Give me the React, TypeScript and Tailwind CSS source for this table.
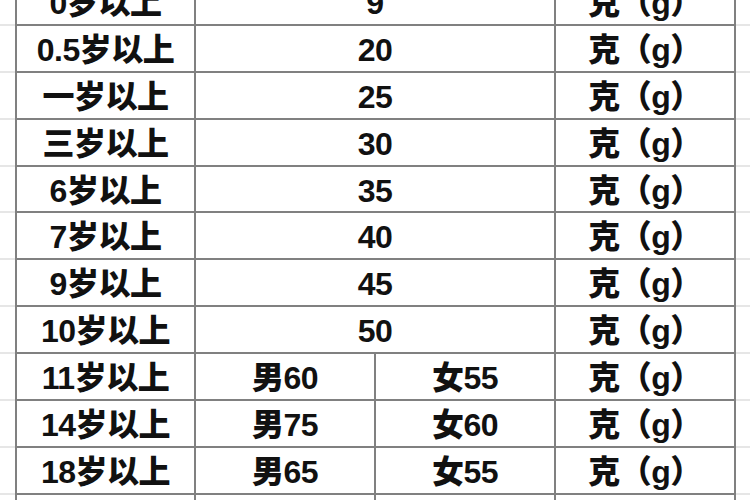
type Row = {
  age: string;
  value?: string;
  male?: string;
  female?: string;
};

const rows: Row[] = [
  { age: '0岁以上', value: '9' },
  { age: '0.5岁以上', value: '20' },
  { age: '一岁以上', value: '25' },
  { age: '三岁以上', value: '30' },
  { age: '6岁以上', value: '35' },
  { age: '7岁以上', value: '40' },
  { age: '9岁以上', value: '45' },
  { age: '10岁以上', value: '50' },
  { age: '11岁以上', male: '男60', female: '女55' },
  { age: '14岁以上', male: '男75', female: '女60' },
  { age: '18岁以上', male: '男65', female: '女55' },
  { age: '20岁以上', male: '男65', female: '女55' },
];

const cell =
  'flex items-center justify-center pt-[3px] border-r-2 border-b-2 border-[#808080] text-[32px] font-black text-[#111] leading-none tracking-[-0.5px]';

function TableRow({ row }: { row: Row }) {
  return (
    <div className="flex h-[46.9px] shrink-0">
      {/* faint grid outside the table */}
      <div className="w-[15px] border-b-2 border-[#e6e6e6]" />
      <div className="grid grid-cols-[179px_180px_180px_180px] border-l-2 border-[#808080]">
        <div className={cell}>{row.age}</div>
        {row.value !== undefined ? (
          <div className={`${cell} col-span-2`}>{row.value}</div>
        ) : (
          <>
            <div className={cell}>{row.male}</div>
            <div className={cell}>{row.female}</div>
          </>
        )}
        <div className={cell}>克（g）</div>
      </div>
      <div className="flex-1 border-b-2 border-[#e6e6e6]" />
    </div>
  );
}

export default function App() {
  return (
    <div
      className="w-[750px] h-[500px] overflow-hidden bg-white"
      style={{ fontFamily: '"Liberation Sans", "Noto Sans CJK SC", sans-serif' }}
    >
      <div className="flex flex-col mt-[-21px]">
        {rows.map(row => (
          <TableRow key={row.age} row={row} />
        ))}
      </div>
    </div>
  );
}
